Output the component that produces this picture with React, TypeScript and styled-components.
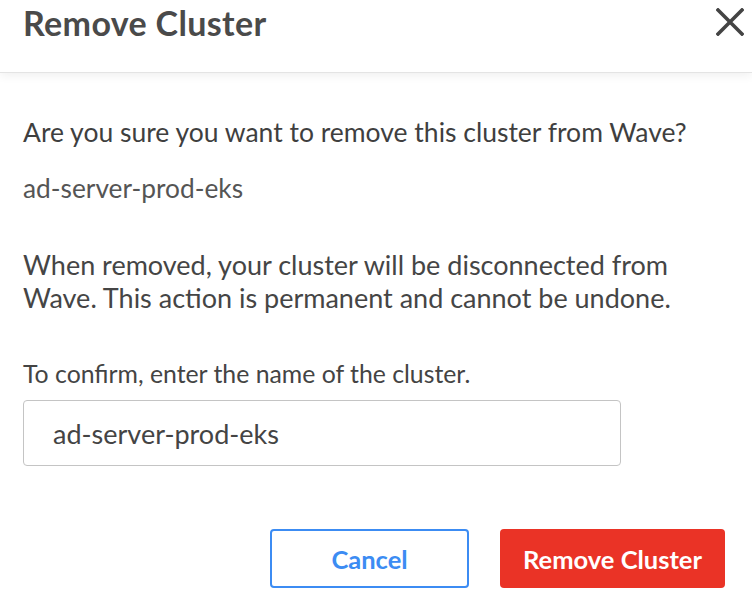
import React from "react";
import styled, { createGlobalStyle } from "styled-components";

const Global = createGlobalStyle`
  html, body { margin: 0; padding: 0; background: #ffffff; }
  body { font-family: Lato, "Open Sans", sans-serif; color: #444; }
  * { box-sizing: border-box; }
`;

const Dialog = styled.div`
  width: 752px;
  height: 596px;
  background: #fff;
  display: flex;
  flex-direction: column;
  overflow: hidden;
`;

const Header = styled.header`
  height: 72px;
  flex: none;
  display: flex;
  align-items: flex-start;
  justify-content: space-between;
  padding: 0 8px 0 23px;
  box-shadow: 0 1px 0 #e4e4e4, 0 3px 10px rgba(0, 0, 0, 0.07);
  position: relative;
  z-index: 1;
`;

const Title = styled.h1`
  margin: 0;
  padding-top: 3px;
  font-size: 34px;
  line-height: 40px;
  letter-spacing: 0.35px;
  font-weight: 700;
  color: #4a4a4a;
`;

const CloseButton = styled.button`
  border: 0;
  background: none;
  padding: 0;
  margin-top: 8px;
  width: 28px;
  height: 28px;
  cursor: pointer;
  color: #444;
  display: flex;
`;

const Body = styled.div`
  padding: 44px 27px 0 23px;
  display: flex;
  flex-direction: column;
`;

const Question = styled.p`
  margin: 0;
  font-size: 26.5px;
  line-height: 32px;
  color: #3f3f3f;
`;

const ClusterName = styled.p`
  margin: 24px 0 0;
  font-size: 26.3px;
  line-height: 32px;
  font-weight: 400;
  color: #555;
`;

const Warning = styled.p`
  margin: 44px 0 0;
  font-size: 27px;
  line-height: 33px;
  color: #454545;
  max-width: 690px;
`;

const Label = styled.label`
  margin-top: 46px;
  font-size: 24.8px;
  line-height: 28px;
  color: #444;
`;

const Input = styled.input`
  margin-top: 12px;
  width: 598px;
  height: 66px;
  border: 1.5px solid #c4c4c4;
  border-radius: 4px;
  padding: 0 29px;
  font-family: Lato, "Open Sans", sans-serif;
  font-size: 27px;
  color: #444;
  outline: none;
`;

const Footer = styled.div`
  display: flex;
  justify-content: flex-end;
  gap: 31px;
  margin-top: 63px;
`;

const Button = styled.button<{ $variant: "primary" | "outline" }>`
  height: 59px;
  border-radius: 4px;
  font-family: Lato, "Open Sans", sans-serif;
  font-size: 25.5px;
  font-weight: 700;
  cursor: pointer;
  ${(p) =>
    p.$variant === "primary"
      ? `background: #ea3326; color: #fff; border: 0; width: 225px;`
      : `background: #fff; color: #3c8cf3; border: 2px solid #3c8cf3; width: 199px;`}
`;

export default function App() {
  return (
    <>
      <Global />
      <Dialog>
        <Header>
          <Title>Remove Cluster</Title>
          <CloseButton aria-label="Close">
            <svg width="28" height="28" viewBox="0 0 28 28">
              <path d="M2 2 L26 26 M26 2 L2 26" stroke="currentColor" strokeWidth="3.6" strokeLinecap="square" />
            </svg>
          </CloseButton>
        </Header>
        <Body>
          <Question>Are you sure you want to remove this cluster from Wave?</Question>
          <ClusterName>ad-server-prod-eks</ClusterName>
          <Warning>
            When removed, your cluster will be disconnected from Wave. This action is permanent and cannot be undone.
          </Warning>
          <Label htmlFor="confirm">To confirm, enter the name of the cluster.</Label>
          <Input id="confirm" defaultValue="ad-server-prod-eks" />
          <Footer>
            <Button $variant="outline">Cancel</Button>
            <Button $variant="primary">Remove Cluster</Button>
          </Footer>
        </Body>
      </Dialog>
    </>
  );
}
